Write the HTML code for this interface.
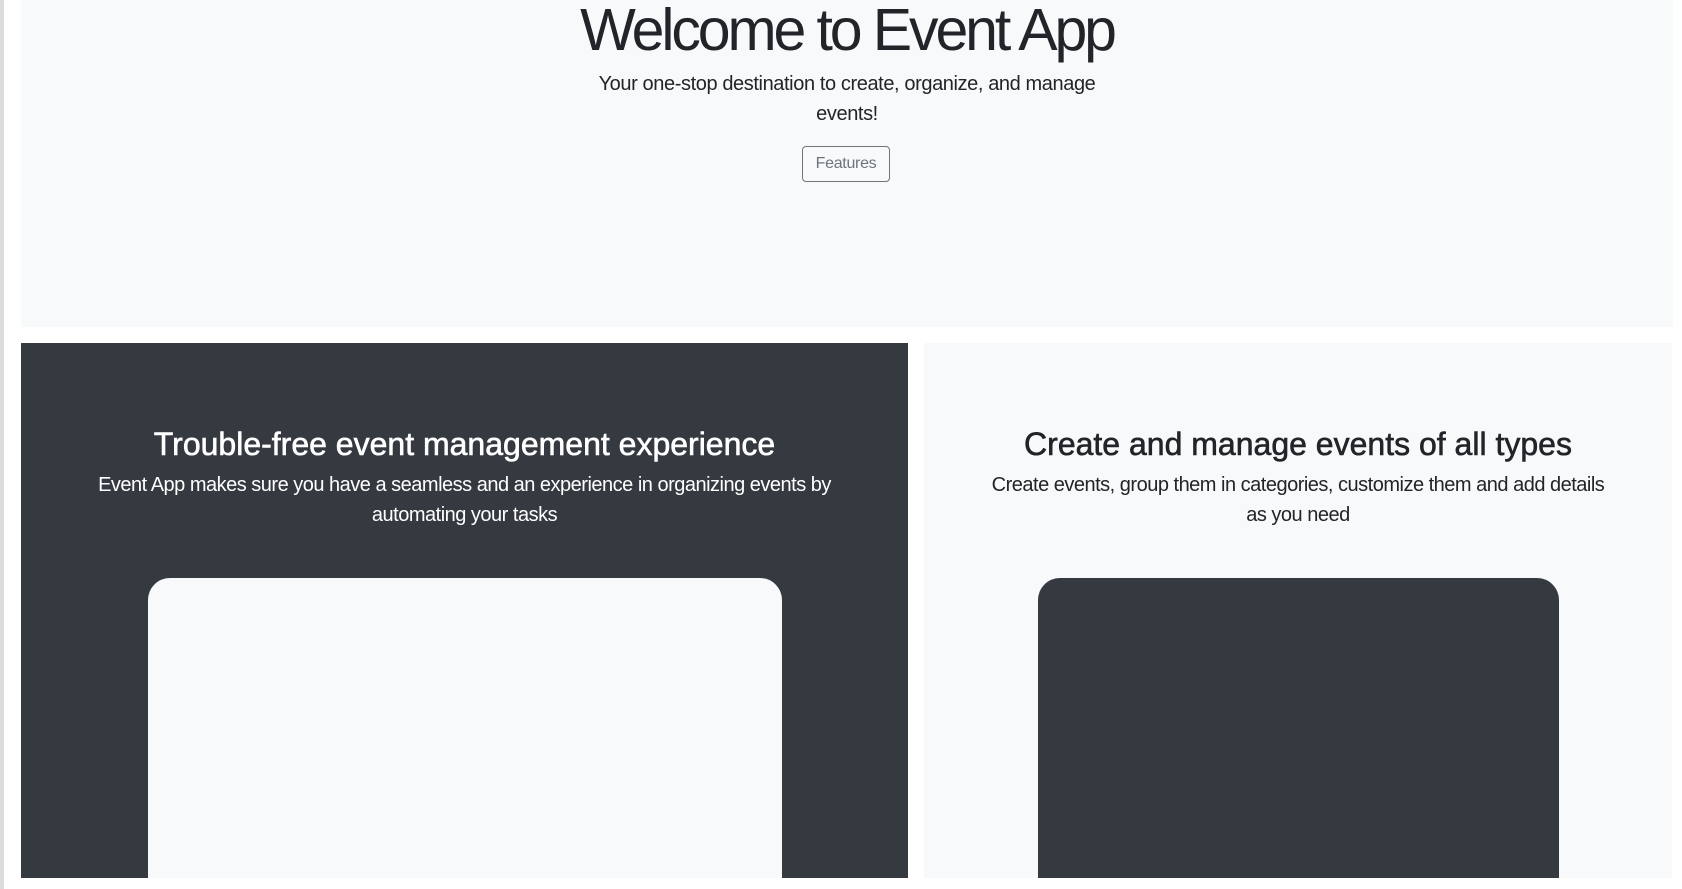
<!DOCTYPE html>
<html><head><meta charset="utf-8"><style>
html,body{margin:0;padding:0;width:1682px;height:889px;overflow:hidden;background:#fff;font-family:"Liberation Sans",Arial,sans-serif;}
.strip{position:absolute;left:0;top:0;width:4px;height:889px;background:#dcdcdc;}
.hero{position:absolute;left:21px;top:0;width:1652px;height:327px;background:#f8f9fa;text-align:center;color:#212529;}
.hero h1{position:absolute;left:0;right:0;top:-6px;margin:0;font-size:59px;font-weight:normal;letter-spacing:-3.1px;line-height:72px;}
.hero p{position:absolute;left:50%;transform:translateX(-50%);top:69px;width:540px;margin:0;font-size:20px;line-height:30px;letter-spacing:-0.4px;}
.btn{position:absolute;left:781px;top:146px;width:88px;height:36px;box-sizing:border-box;border:1px solid #6c757d;border-radius:4px;color:#6c757d;font-size:16px;line-height:34px;letter-spacing:-0.3px;background:transparent;}
.panel{position:absolute;top:343px;height:535px;text-align:center;}
.dark{left:21px;width:887px;background:#343a40;color:#fff;}
.light{left:924px;width:748px;background:#f8f9fa;color:#212529;}
.panel h2{position:absolute;left:0;right:0;top:80px;margin:0;font-size:32px;font-weight:normal;letter-spacing:0;line-height:42px;-webkit-text-stroke:0.6px currentColor;}
.panel p{position:absolute;left:0;right:0;top:127px;margin:0 auto;font-size:20px;line-height:30px;letter-spacing:-0.5px;}
.card{position:absolute;top:235px;height:300px;border-radius:22px 22px 0 0;}
</style></head><body>
<div class="strip"></div>
<div class="hero">
<h1>Welcome to Event App</h1>
<p>Your one-stop destination to create, organize, and manage events!</p>
<div class="btn">Features</div>
</div>
<div class="panel dark">
<h2>Trouble-free event management experience</h2>
<p style="width:760px">Event App makes sure you have a seamless and an experience in organizing events by automating your tasks</p>
<div class="card" style="left:127px;width:634px;background:#f8f9fa;"></div>
</div>
<div class="panel light">
<h2>Create and manage events of all types</h2>
<p style="width:620px">Create events, group them in categories, customize them and add details as you need</p>
<div class="card" style="left:114px;width:521px;background:#343a40;"></div>
</div>
</body></html>
